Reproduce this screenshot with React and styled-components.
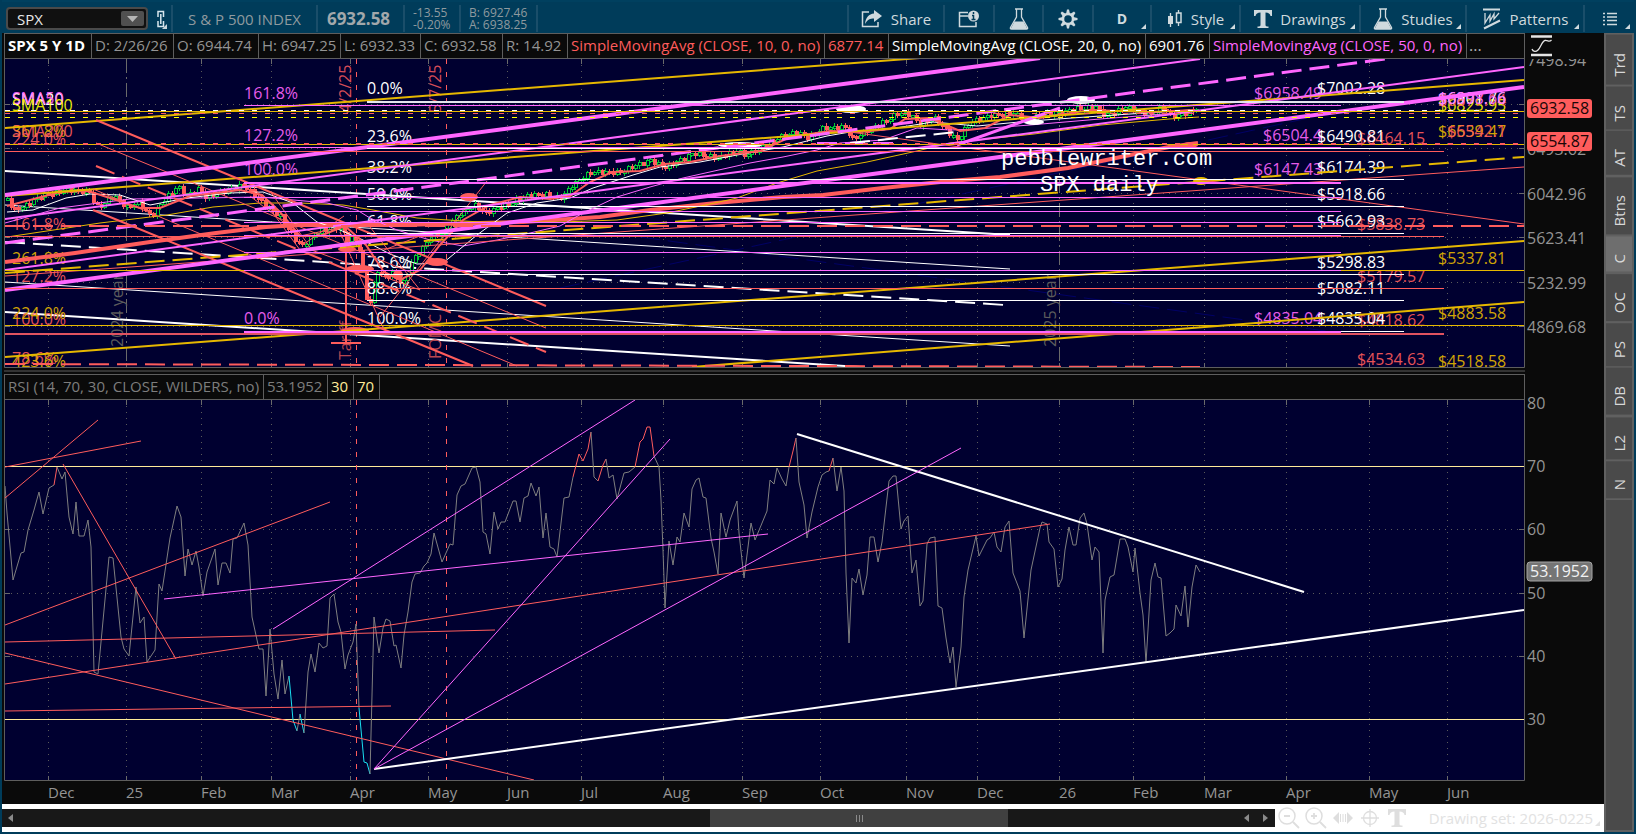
import styled, { createGlobalStyle } from "styled-components";

const PINK = "#ff66ff";
const RED = "#ff5c5c";
const GOLD = "#e6b800";
const WHITE = "#ffffff";
const GREEN = "#00cc33";
const LEFT = 5;
const RIGHT = 1524;

/* ---------- data ---------- */

const headerCells = [
  { text: "SPX 5 Y 1D", width: 87, color: WHITE, bold: true },
  { text: "D: 2/26/26", width: 82 },
  { text: "O: 6944.74", width: 85 },
  { text: "H: 6947.25", width: 82 },
  { text: "L: 6932.33", width: 80 },
  { text: "C: 6932.58", width: 82 },
  { text: "R: 14.92", width: 65 },
  { text: "SimpleMovingAvg (CLOSE, 10, 0, no)", width: 257, color: RED },
  { text: "6877.14", width: 64, color: RED },
  { text: "SimpleMovingAvg (CLOSE, 20, 0, no)", width: 257, color: WHITE },
  { text: "6901.76", width: 64, color: WHITE },
  { text: "SimpleMovingAvg (CLOSE, 50, 0, no)", width: 257, color: PINK },
];

const rsiCells = [
  { text: "RSI (14, 70, 30, CLOSE, WILDERS, no)", width: 259, color: "#7d7d7d" },
  { text: "53.1952", width: 64, color: "#7d7d7d" },
  { text: "30", width: 26, color: "#ffeb99" },
  { text: "70", width: 26, color: "#ffeb99" },
];

const railTabs = ["Trd", "TS", "AT", "Btns", "C", "OC", "PS", "DB", "L2", "N"];

const months = [
  [48, "Dec"], [126, "25"], [201, "Feb"], [271, "Mar"], [350, "Apr"],
  [428, "May"], [507, "Jun"], [581, "Jul"], [663, "Aug"], [742, "Sep"],
  [820, "Oct"], [906, "Nov"], [977, "Dec"], [1059, "26"], [1133, "Feb"],
  [1204, "Mar"], [1286, "Apr"], [1369, "May"], [1447, "Jun"],
];

const priceGrid = [
  [104, null], [148, "6493.62"], [193, "6042.96"], [237, "5623.41"],
  [282, "5232.99"], [326, "4869.68"],
];

const rsiGrid = [
  [403, "80"], [466, "70"], [529, "60"], [593, "50"], [656, "40"], [719, "30"],
];

// y, colour, start, end, width, dash
const levels = [
  [111, GOLD, LEFT, RIGHT, 1],
  [110, WHITE, LEFT, RIGHT, 1, "5 8"],
  [113, RED, LEFT, RIGHT, 1, "5 8"],
  [117, "#ffff00", LEFT, RIGHT, 1, "5 8"],
  [144, GOLD, LEFT, RIGHT, 1],
  [143, RED, LEFT, RIGHT, 2, "5 8"],
  [151, RED, LEFT, 1444, 1],
  [225, RED, LEFT, RIGHT, 2, "20 8"],
  [236, RED, LEFT, 1444, 1],
  [270, GOLD, LEFT, RIGHT, 1],
  [288, RED, LEFT, 1444, 1],
  [325, GOLD, LEFT, RIGHT, 1],
  [333, "#e05260", LEFT, 1444, 2],
  [101, "#e4e4ee", 367, 1404, 2],
  [148, WHITE, 367, 1404, 1],
  [179, WHITE, 367, 1404, 1],
  [206, WHITE, 367, 1404, 1],
  [233, WHITE, 367, 1404, 1],
  [274, WHITE, 367, 1404, 1],
  [300, WHITE, 367, 1404, 1],
  [331, WHITE, 367, 1404, 1],
  [105, PINK, 244, 1341, 1],
  [147, PINK, 244, 1341, 1],
  [182, PINK, 244, 1341, 2],
  [197, PINK, 244, 1341, 1],
  [211, PINK, 244, 1341, 1],
  [222, PINK, 244, 1341, 1],
  [235, PINK, 244, 1341, 1],
  [252, PINK, 244, 1341, 1],
  [270, PINK, 244, 1341, 1],
  [331, PINK, 244, 1341, 2],
];

// x1, y1, x2, y2, colour, width, dash
const backTrends = [
  [560, 288, 796, 237, "#000066", 1, "20 8"],
  [640, 237, 1340, 333, "#000066", 1, "20 8"],
  [880, 212, 1345, 110, "#000066", 1, "20 8"],
  [5, 171, 1010, 235, WHITE, 2],
  [5, 242, 1005, 305, WHITE, 2, "20 8"],
  [5, 205, 1010, 269, WHITE, 1],
  [5, 282, 1010, 346, WHITE, 1],
  [5, 312, 860, 367, WHITE, 2],
];

const frontTrends = [
  [5, 128, 920, 58, GOLD, 2],
  [5, 196, 1524, 80, GOLD, 2],
  [5, 273, 1524, 157, GOLD, 2, "20 8"],
  [5, 357, 1524, 241, GOLD, 2],
  [692, 367, 1524, 302, GOLD, 2],
  [5, 276, 1524, 167, RED, 1],
  [850, 132, 1524, 224, RED, 1],
  [96, 120, 546, 306, RED, 2],
  [96, 143, 546, 328, RED, 1],
  [96, 166, 546, 352, RED, 2, "20 8"],
  [93, 189, 517, 366, RED, 1],
  [93, 210, 473, 366, RED, 2],
  [5, 364, 1200, 367, RED, 2, "20 8"],
  [380, 317, 487, 181, RED, 1],
  [257, 191, 300, 250, RED, 1],
  [270, 191, 312, 250, RED, 1],
  [250, 196, 296, 232, RED, 1],
  [304, 244, 344, 216, RED, 1],
  [300, 236, 366, 222, RED, 1],
  [306, 248, 420, 290, RED, 1],
  [366, 222, 420, 290, RED, 1],
  [340, 232, 384, 330, RED, 1],
  [384, 250, 430, 232, RED, 1],
  [5, 195, 1040, 58, PINK, 4],
  [5, 219, 1200, 59, PINK, 2],
  [5, 243, 1385, 59, PINK, 3, "20 8"],
  [5, 270, 1524, 67, PINK, 2],
  [5, 290, 1524, 87, PINK, 4],
  [957, 145, 1060, 108, PINK, 3],
  [817, 143, 897, 143, PINK, 2, "20 8"],
  [850, 143, 957, 132, WHITE, 2, "20 8"],
];

const curves = [
  {
    color: RED,
    width: 4,
    points:
      "5,262 75,253 150,242 216,233 266,227 300,225 400,225 523,222 600,217 650,210 716,203 783,197 823,195 883,188 950,181 1000,177 1068,168 1135,154 1169,147 1198,143",
  },
  {
    color: GOLD,
    width: 1,
    points:
      "7,237 100,223 167,215 213,207 260,203 300,203 343,205 373,210 417,218 480,222 560,222 617,220 667,213 710,204 737,198 777,183 817,171 867,162 917,151 950,143 1034,134 1101,125 1169,119 1199,117",
  },
  {
    color: PINK,
    width: 1,
    points:
      "5,223 60,208 130,199 200,198 260,197 327,203 357,210 370,218 397,230 430,240 463,246 497,240 530,233 560,226 583,213 617,197 650,187 683,178 750,163 783,157 817,150 840,143 883,140 917,128 950,130 977,129 1030,125 1100,119 1190,112",
  },
  {
    color: WHITE,
    width: 1,
    points:
      "7,212 33,210 66,198 90,194 120,195 150,205 187,198 230,193 263,192 293,203 317,222 340,230 363,240 390,254 417,264 443,263 477,235 507,213 537,203 570,198 593,188 633,175 660,167 700,162 737,155 783,147 827,136 850,132 883,130 933,122 977,126 1030,121 1100,116 1190,110",
  },
  {
    color: RED,
    width: 2,
    points:
      "7,206 30,200 60,192 88,191 110,198 140,208 160,208 190,196 240,190 262,195 280,212 300,236 320,236 345,226 366,245 384,272 400,280 420,270 440,245 463,220 490,205 520,197 550,199 570,196 590,182 612,172 640,171 665,164 690,162 720,156 760,151 790,137 830,131 860,132 890,129 905,119 930,118 960,131 985,128 1010,115 1040,118 1090,110 1150,112 1195,110",
  },
];

const blobs = [
  [347, 249, 9, 3, RED], [360, 269, 14, 4, RED], [398, 275, 5, 5, RED],
  [355, 331, 14, 4, RED], [437, 262, 11, 4, RED], [469, 197, 9, 4, RED],
  [1190, 145, 8, 3, RED], [740, 145, 22, 3, WHITE], [851, 109, 15, 4, WHITE],
  [1081, 100, 14, 4, WHITE], [1034, 122, 10, 3, WHITE], [1201, 181, 8, 4, GOLD],
];

// swing points the daily bars run through
const swings = [
  [7, 198], [13, 210], [23, 207], [40, 196], [66, 190], [90, 192], [95, 207],
  [103, 205], [112, 195], [127, 208], [137, 202], [151, 217], [166, 197],
  [177, 187], [187, 195], [200, 188], [204, 198], [217, 193], [243, 185],
  [253, 195], [267, 207], [280, 217], [293, 237], [302, 246], [317, 232],
  [340, 227], [347, 240], [354, 238], [359, 250], [364, 282], [368, 312],
  [373, 286], [378, 268], [382, 278], [393, 273], [402, 286], [412, 260],
  [423, 247], [430, 237], [443, 233], [457, 215], [473, 205], [487, 213],
  [497, 208], [517, 200], [530, 195], [547, 195], [561, 198], [570, 187],
  [590, 172], [620, 172], [650, 160], [665, 168], [693, 153], [717, 158],
  [737, 150], [745, 156], [760, 148], [777, 138], [797, 132], [807, 138],
  [823, 128], [847, 127], [850, 140], [863, 133], [887, 120], [897, 113],
  [910, 115], [920, 125], [933, 117], [943, 127], [957, 140], [970, 122],
  [993, 115], [1013, 113], [1027, 121], [1040, 114], [1057, 114],
  [1074, 109], [1095, 107], [1105, 116], [1125, 107], [1149, 115],
  [1162, 107], [1172, 117], [1186, 113], [1198, 108],
];

const makeBars = () => {
  const bars = [];
  let seg = 0;
  let last = swings[0][1];
  for (let i = 0; i < 319; i++) {
    const x = 7 + i * 3.74;
    while (seg < swings.length - 2 && x > swings[seg + 1][0]) seg++;
    const [x1, y1] = swings[seg];
    const [x2, y2] = swings[seg + 1];
    const base = y1 + ((y2 - y1) * (x - x1)) / (x2 - x1);
    const close = base + Math.sin(i * 2.3) * 2.2;
    const body = Math.max(2, Math.abs(close - last));
    const tail = 1 + Math.abs(Math.sin(i * 1.7)) * 2;
    bars.push({ x: Math.round(x), top: Math.min(close, last), body, tail, down: close > last });
    last = close;
  }
  return bars;
};
const bars = makeBars();

// x, baseline, text, colour
const labels = [
  [12, 105, "SMA10", RED], [12, 105, "SMA20", WHITE], [12, 104, "SMA50", PINK],
  [12, 111, "SMA100", "#ffff00"], [12, 137, "361.8%", GOLD],
  [12, 137, "SMA200", RED], [12, 145, "224.0%", RED],
  [12, 230, "161.8%", RED], [12, 264, "261.8%", GOLD], [12, 282, "127.2%", RED],
  [12, 325, "100.0%", RED], [12, 319, "224.0%", GOLD],
  [12, 364, "78.6%", RED], [12, 367, "423.6%", GOLD],
  [244, 99, "161.8%", PINK], [244, 141, "127.2%", PINK],
  [244, 175, "100.0%", PINK], [244, 324, "0.0%", PINK],
  [1254, 99, "$6958.49", PINK], [1263, 141, "$6504.4", PINK],
  [1254, 175, "$6147.43", PINK], [1254, 324, "$4835.04", PINK],
  [1357, 144, "$6464.15", RED], [1357, 230, "$5838.73", RED],
  [1357, 282, "$5179.57", RED], [1357, 326, "$4818.62", RED],
  [1357, 365, "$4534.63", RED],
  [367, 94, "0.0%", WHITE], [367, 142, "23.6%", WHITE],
  [367, 173, "38.2%", WHITE], [367, 200, "50.0%", WHITE],
  [367, 227, "61.8%", WHITE], [367, 268, "78.6%", WHITE],
  [367, 294, "88.6%", WHITE], [367, 324, "100.0%", WHITE],
  [1317, 94, "$7002.28", WHITE], [1317, 142, "$6490.81", WHITE],
  [1317, 173, "$6174.39", WHITE], [1317, 200, "$5918.66", WHITE],
  [1317, 227, "$5662.93", WHITE], [1317, 268, "$5298.83", WHITE],
  [1317, 294, "$5082.11", WHITE], [1317, 324, "$4835.04", WHITE],
  [1438, 111, "$6825.95", "#ffff00"], [1438, 106, "$6877.14", RED],
  [1438, 104, "$6901.76", WHITE], [1438, 104, "$6898.66", PINK],
  [1438, 137, "$6539.47", GOLD], [1447, 137, "$6542.1", RED],
  [1438, 264, "$5337.81", GOLD], [1438, 319, "$4883.58", GOLD],
  [1438, 367, "$4518.58", GOLD],
];

const sideLabels = [
  [351, 113, "4/2/25", "#d64e58"], [351, 360, "Tariff", "#b84650"],
  [441, 113, "5/7/25", "#d64e58"], [441, 359, "FOMC", "#b84650"],
  [123, 347, "2024 year", "#5c5c5c"], [1056, 347, "2025 year", "#5c5c5c"],
];

const rsiRuns = [
  ["#7f7f7f", "5,486 7,513 13,580 21,553 24,552 28,530 34,510 39,492 43,514 49,488 54,485"],
  [RED, "54,485 57,467"],
  ["#7f7f7f", "57,467 62,479 65,472 69,517 73,534 76,502 79,536 84,536 88,520 91,547 94,672 98,674 109,557 113,558 121,637 124,649 129,656 136,587 140,623 144,617 147,662 155,650 159,584 162,591 170,538 177,506 181,517 185,576 188,549 192,565 196,551 199,567 203,596 207,572 215,549 218,585 222,563 226,563 230,573 233,539 237,538 244,523 248,545 252,617 259,649 263,649 266,696 270,629 274,674 278,699 282,660 285,694 289,676"],
  ["#19e0f0", "289,676 293,720 297,731"],
  ["#7f7f7f", "297,731 300,714"],
  ["#19e0f0", "300,714 304,733"],
  ["#7f7f7f", "304,733 308,672 311,654 315,672 319,643 323,648 327,646 330,598 334,594 338,622 341,632 345,669 348,655 353,642 356,624 359,708"],
  ["#19e0f0", "359,708 364,762 367,763 370,774"],
  ["#7f7f7f", "370,774 374,617 379,653 383,628 386,619 390,621 394,646 396,645 401,668 404,635 408,612 412,582 415,574 420,573 424,566 427,563 431,554 434,533 442,562 450,544 453,545 457,495 461,486 465,484 472,468 476,467 480,482 483,532 486,534 490,554 494,512 498,529 501,522 505,522 513,501 516,501 520,522 524,498 528,496 531,483 536,496 539,487 543,538 546,513 550,547 554,549 557,557 564,498 569,497 573,477"],
  [RED, "573,477 579,454 583,461 588,449 591,432"],
  ["#7f7f7f", "591,432 594,477 598,481"],
  [RED, "598,481 603,465 606,459"],
  ["#7f7f7f", "606,459 609,478 613,475 617,499 624,473 629,472 635,467"],
  [RED, "635,467 640,442 643,439 647,427 650,427 654,456"],
  ["#7f7f7f", "654,456 659,467 661,500 663,550 665,608 669,541 673,565 677,537 680,542 684,513 689,527 692,489 696,480 699,478 703,497 706,498 711,538 714,552 718,574 721,513 726,537 730,520 737,501 739,533 744,578 747,555 751,523 755,540 767,511 770,480 774,484 777,468 782,479 786,486 789,467"],
  [RED, "789,467 793,451 796,438"],
  ["#7f7f7f", "796,438 799,482 804,505 807,538 812,512 818,487 822,475 826,472 829,471"],
  [RED, "829,471 833,458"],
  ["#7f7f7f", "833,458 837,491 841,467 844,491 846,573 849,643 852,578 856,583 859,569 863,595 867,575 870,537 874,537 878,562 882,542 889,481 893,476 896,476 901,529 904,521 908,516 912,573 916,560 920,606 923,601 927,544 930,538 935,537 938,606 942,608 946,638 950,663 953,647 956,687 961,647 964,597 968,570 976,536 979,556 987,540 990,538 994,532 997,547 1001,552 1005,527 1009,521 1013,573 1020,591 1024,638 1031,570 1040,528 1042,522 1047,524 1049,542 1054,549 1058,587 1062,579 1065,550 1069,527 1073,545 1076,545 1080,518 1084,513 1087,524 1092,560 1095,547 1099,552 1103,653 1105,600 1110,577 1114,575 1120,539 1125,539 1128,547 1133,572 1135,548 1140,593 1143,615 1146,663 1151,580 1155,563 1158,577 1161,578 1166,636 1170,633 1174,629 1176,605 1181,616 1185,586 1188,627 1192,587 1196,565 1200,572"],
];

const rsiTrends = [
  [5, 498, 98, 420, RED, 1],
  [5, 467, 141, 441, RED, 1],
  [63, 464, 176, 659, RED, 1],
  [5, 625, 330, 502, RED, 1],
  [5, 642, 495, 630, RED, 1],
  [5, 684, 1050, 524, RED, 1],
  [5, 653, 534, 780, RED, 1],
  [5, 711, 391, 706, RED, 1],
  [374, 769, 1524, 610, WHITE, 2],
  [797, 434, 1304, 592, WHITE, 2],
  [164, 599, 768, 534, PINK, 1],
  [273, 629, 635, 400, PINK, 1],
  [374, 769, 670, 439, PINK, 1],
  [374, 769, 961, 448, PINK, 1],
];

/* ---------- chart parts ---------- */

const HLine = ({ y, x1 = LEFT, x2 = RIGHT, color, width = 1, dash }) => (
  <line
    x1={x1}
    x2={x2}
    y1={y + width / 2}
    y2={y + width / 2}
    stroke={color}
    strokeWidth={width}
    strokeDasharray={dash}
    shapeRendering="crispEdges"
  />
);

const VLine = ({ x, y1, y2, color, dash }) => (
  <line
    x1={x + 0.5}
    x2={x + 0.5}
    y1={y1}
    y2={y2}
    stroke={color}
    strokeDasharray={dash}
    shapeRendering="crispEdges"
  />
);

const Trends = ({ items }) =>
  items.map(([x1, y1, x2, y2, color, width, dash], i) => (
    <line
      key={i}
      x1={x1}
      y1={y1}
      x2={x2}
      y2={y2}
      stroke={color}
      strokeWidth={width}
      strokeDasharray={dash}
    />
  ));

const Grid = ({ top, bottom, rows }) => (
  <>
    {rows.map(([y]) => (
      <g key={y}>
        <HLine y={y} color="#5a5a5a" dash="1 5" />
        <HLine y={y} x1={LEFT} x2={10} color="#6a6a6a" />
        <HLine y={y} x1={1519} color="#6a6a6a" />
      </g>
    ))}
    {months.map(([x]) => (
      <g key={x}>
        <VLine x={x} y1={top} y2={bottom} color="#5a5a5a" dash="1 5" />
        <VLine x={x} y1={top} y2={top + 5} color="#6a6a6a" />
        <VLine x={x} y1={bottom - 4} y2={bottom} color="#6a6a6a" />
      </g>
    ))}
  </>
);

const Tag = ({ y, text, fill, stroke, color }) => (
  <g>
    <rect x="1527" y={y} width="65" height="19" rx="3" fill={fill} stroke={stroke} />
    <text x="1530" y={y + 15} fill={color}>
      {text}
    </text>
  </g>
);

const PriceChart = () => (
  <Chart viewBox="4 59 1600 309" role="img" aria-label="SPX daily price">
    <clipPath id="pricePlot">
      <rect x="5" y="59" width="1519" height="308" />
    </clipPath>
    <rect x="4" y="58" width="1520" height="309" fill="#000030" />
    <g clipPath="url(#pricePlot)">
      <Grid top={59} bottom={367} rows={priceGrid} />
      <VLine x={126} y1={59} y2={367} color="#6a6a6a" dash="14 4 2 4" />
      <VLine x={1059} y1={59} y2={367} color="#6a6a6a" dash="14 4 2 4" />
      <VLine x={356} y1={59} y2={367} color={RED} dash="5 8" />
      <VLine x={446} y1={59} y2={367} color={RED} dash="5 8" />
      <Trends items={backTrends} />
      {bars.map(({ x, top, body, tail, down }) => (
        <g key={x} shapeRendering="crispEdges">
          <line
            x1={x + 0.5}
            x2={x + 0.5}
            y1={top - tail}
            y2={top + body + tail}
            stroke={down ? RED : GREEN}
          />
          <rect
            x={x - 1}
            y={top}
            width="3"
            height={body}
            fill={down ? RED : "#000030"}
            stroke={down ? RED : GREEN}
          />
        </g>
      ))}
      {sideLabels.map(([x, y, text, color]) => (
        <text key={text} transform={`translate(${x} ${y}) rotate(-90)`} fill={color}>
          {text}
        </text>
      ))}
      {labels.map(([x, y, text, color], i) => (
        <text key={i} x={x} y={y} fill={color} opacity={color === WHITE ? 1 : 0.9}>
          {text}
        </text>
      ))}
      {curves.map(({ color, width, points }) => (
        <polyline key={points} points={points} fill="none" stroke={color} strokeWidth={width} />
      ))}
      {blobs.map(([cx, cy, rx, ry, fill]) => (
        <ellipse key={cx} cx={cx} cy={cy} rx={rx} ry={ry} fill={fill} />
      ))}
      <path d="M348 234V343M333 343h30" transform="translate(-2 0)" stroke={RED} strokeWidth="2" fill="none" />
      <Trends items={frontTrends} />
      {levels.map(([y, color, x1, x2, width, dash], i) => (
        <HLine key={i} y={y} color={color} x1={x1} x2={x2} width={width} dash={dash} />
      ))}
      <Note x="1001" y="165">pebblewriter.com</Note>
      <Note x="1040" y="191">SPX daily</Note>
    </g>
    <path d="M4.500 58V367.500H1524.500V58" fill="none" stroke="#5e5e5e" />
    <text x="1527" y="66" fill="#949494">7498.94</text>
    {priceGrid.map(
      ([y, text]) =>
        text && (
          <text key={y} x="1527" y={y + 7} fill="#949494">
            {text}
          </text>
        )
    )}
    <Tag y={99} text="6932.58" fill={RED} color="#1a0606" />
    <Tag y={132} text="6554.87" fill={RED} color="#1a0606" />
  </Chart>
);

const RsiChart = () => (
  <Chart viewBox="4 400 1600 404" role="img" aria-label="RSI" $spill>
    <clipPath id="rsiPlot">
      <rect x="5" y="400" width="1519" height="380" />
    </clipPath>
    <rect x="4" y="400" width="1520" height="380" fill="#000030" />
    <g clipPath="url(#rsiPlot)">
      <Grid top={400} bottom={780} rows={rsiGrid.slice(1)} />
      <HLine y={466} color="#ffeb99" />
      <HLine y={719} color="#ffeb99" />
      <VLine x={356} y1={400} y2={780} color={RED} dash="5 8" />
      <VLine x={446} y1={400} y2={780} color={RED} dash="5 8" />
      {rsiRuns.map(([color, points]) => (
        <polyline key={points} points={points} fill="none" stroke={color} />
      ))}
      <Trends items={rsiTrends} />
    </g>
    <path d="M4.500 400V780.500H1524.500V400" fill="none" stroke="#5e5e5e" />
    {rsiGrid.map(([y, text]) => (
      <text key={y} x="1527" y={y + 6} fill="#949494">
        {text}
      </text>
    ))}
    <Tag y={562} text="53.1952" fill="#757575" stroke="#a5a5a5" color="#f2f2f2" />
    {months.map(([x, text]) => (
      <Month key={x} x={x} y="798">
        {text}
      </Month>
    ))}
  </Chart>
);

/* ---------- icons ---------- */

const ShareIcon = () => (
  <svg width="22" height="18" viewBox="0 0 22 18">
    <path d="M8 2H1.500V16.500H17V12" fill="none" stroke="currentColor" strokeWidth="1.500" />
    <path d="M13 0l8 6-8 6V8.500C9 8.500 6.500 9.500 4 14 4.500 7.500 8 4 13 3.500z" fill="currentColor" />
  </svg>
);

const InfoIcon = () => (
  <svg width="22" height="18" viewBox="0 0 22 18">
    <path d="M10 2.500H1.500V16.500H18V12M2 6h8" fill="none" stroke="currentColor" strokeWidth="1.500" />
    <circle cx="15.500" cy="6" r="5.500" fill="currentColor" />
    <path d="M15.500 2v2M14 5.500h1.500V9M13.500 9.500h4" stroke="#003c5a" strokeWidth="1.500" fill="none" />
  </svg>
);

const FlaskIcon = () => (
  <svg width="20" height="22" viewBox="0 0 20 22">
    <path d="M6 1h8M7.500 1v8L1.500 19.500q-.5 1.500 1 1.500h15q1.500 0 1-1.500L12.500 9V1" fill="none" stroke="currentColor" strokeWidth="1.300" />
    <path d="M5.500 13.500h9l4 7.500h-17z" fill="currentColor" />
  </svg>
);

const GearIcon = () => (
  <svg width="20" height="20" viewBox="0 0 20 20">
    <circle cx="10" cy="10" r="5" fill="none" stroke="currentColor" strokeWidth="2.500" />
    {[0, 45, 90, 135, 180, 225, 270, 315].map((a) => (
      <path key={a} d="M8 5L9 .5h2L12 5z" fill="currentColor" transform={`rotate(${a} 10 10)`} />
    ))}
  </svg>
);

const CandleIcon = () => (
  <svg width="16" height="18" viewBox="0 0 16 18">
    <path d="M3.500 3v14M11.500 0v3M11.500 13v3" stroke="currentColor" strokeWidth="1.300" />
    <path d="M1 6h5v8H1z" fill="currentColor" />
    <path d="M9.500 3h4.500v9.500H9.500z" fill="none" stroke="currentColor" strokeWidth="1.500" />
  </svg>
);

const TextIcon = () => (
  <svg width="18" height="18" viewBox="0 0 18 18">
    <path d="M0 0h18v6h-1.500Q16 2.500 11.500 2.500V15q0 1.500 3 1.500V18h-11v-1.500q3 0 3-1.500V2.500Q2 2.500 1.500 6H0z" fill="currentColor" />
  </svg>
);

const PatternIcon = () => (
  <svg width="20" height="22" viewBox="0 0 20 22">
    <path d="M1 1.500h17M2 20.500L18 12.500" stroke="currentColor" strokeWidth="2" />
    <path d="M3 5v10l5-8v6l4-7v5l5-6" fill="none" stroke="currentColor" strokeWidth="1.300" />
  </svg>
);

const ListIcon = () => (
  <svg width="14" height="14" viewBox="0 0 14 14">
    <path d="M0 1.500h2M4 1.500h10M0 5h2M4 5h10M0 8.500h2M4 8.500h10M0 12.500h2M4 12.500h10" stroke="currentColor" strokeWidth="1.600" />
  </svg>
);

const LinkIcon = () => (
  <svg width="8" height="18" viewBox="0 0 8 18">
    <path d="M1 7V1.500h5.500V7M1 11v5.500h5.500V11M3.800 4v10" fill="none" stroke="#d6e6ee" strokeWidth="1.500" />
  </svg>
);

const CurveIcon = () => (
  <svg width="22" height="22" viewBox="0 0 22 22">
    <path d="M0 1.500h21M0 20h21" stroke="#e4e4e4" strokeWidth="2.500" />
    <path d="M1 14c1 3 4 3 6 1 3-3 4-9 7-9.500 3-.5 4 2 6.500-.5" fill="none" stroke="#e4e4e4" strokeWidth="1.300" />
  </svg>
);

const ZoomIcon = ({ plus }) => (
  <svg width="22" height="22" viewBox="0 0 22 22">
    <circle cx="9" cy="9" r="8" fill="none" stroke="currentColor" strokeWidth="1.500" />
    <path d={plus ? "M6 9h6M9 6v6M15 15l6 6" : "M6 9h6M15 15l6 6"} fill="none" stroke="currentColor" strokeWidth="1.800" />
  </svg>
);

const WidthIcon = () => (
  <svg width="20" height="14" viewBox="0 0 20 14">
    <path d="M0 7l6-6v12zM20 7l-6-6v12z" fill="currentColor" />
    <path d="M7.500 3v8M10 3v8M12.500 3v8" stroke="currentColor" />
  </svg>
);

const CrossIcon = () => (
  <svg width="18" height="18" viewBox="0 0 18 18">
    <circle cx="9" cy="9" r="6.500" fill="none" stroke="currentColor" strokeWidth="1.300" />
    <path d="M9 0v18M0 9h18" stroke="currentColor" strokeWidth="1.300" />
  </svg>
);

const Arrow = ({ right }) => (
  <svg width="5" height="8" viewBox="0 0 5 8">
    <path d={right ? "M0 0l5 4-5 4z" : "M5 0L0 4l5 4z"} fill="#8a8a8a" />
  </svg>
);

/* ---------- page ---------- */

const StudyHeader = ({ cells, more }) => (
  <HeaderRow>
    {cells.map(({ text, width, color, bold }) => (
      <HeaderCell key={text} $width={width} $color={color} $bold={bold}>
        {text}
      </HeaderCell>
    ))}
    {more && <More>...</More>}
  </HeaderRow>
);

const App = () => {
  return (
    <Page>
      <GlobalStyle />
      <Toolbar>
        <SymbolBox>
          <SymbolInput aria-label="Symbol" defaultValue="SPX" />
          <DropButton aria-label="Choose symbol">
            <svg width="11" height="6" viewBox="0 0 11 6">
              <path d="M0 0h11L5.500 6z" fill="#b5b5b5" />
            </svg>
          </DropButton>
        </SymbolBox>
        <LinkButton aria-label="Link" $menu>
          <LinkIcon />
        </LinkButton>
        <Quote $width={145}>S &amp; P 500 INDEX</Quote>
        <Quote $width={87}>
          <LastPrice>6932.58</LastPrice>
        </Quote>
        <Quote $width={56} $small>
          <span>-13.55</span>
          <span>-0.20%</span>
        </Quote>
        <Quote $width={77} $small>
          <span>B: 6927.46</span>
          <span>A: 6938.25</span>
        </Quote>
        <Spacer />
        <ToolButton $width={96}><ShareIcon />Share</ToolButton>
        <ToolButton $width={50} aria-label="Company info"><InfoIcon /></ToolButton>
        <ToolButton $width={49} aria-label="Edit studies"><FlaskIcon /></ToolButton>
        <ToolButton $width={50} aria-label="Settings"><GearIcon /></ToolButton>
        <ToolButton $width={58} $menu><Period>D</Period></ToolButton>
        <ToolButton $width={89} $menu><CandleIcon />Style</ToolButton>
        <ToolButton $width={120} $menu><TextIcon />Drawings</ToolButton>
        <ToolButton $width={106} $menu><FlaskIcon />Studies</ToolButton>
        <ToolButton $width={118} $menu><PatternIcon />Patterns</ToolButton>
        <ToolButton $width={51} $menu aria-label="Menu"><ListIcon /></ToolButton>
      </Toolbar>
      <Body>
        <Main>
          <Panels>
            <HeaderLine>
              <StudyHeader cells={headerCells} more />
              <ScaleButton aria-label="Scale"><CurveIcon /></ScaleButton>
            </HeaderLine>
            <PriceChart />
            <Splitter />
            <HeaderLine>
              <StudyHeader cells={rsiCells} />
              <AxisGap />
            </HeaderLine>
            <RsiChart />
          </Panels>
          <Footer>
            <ScrollTrack>
              <Arrow />
              <Thumb>
                <Grip />
                <Grip />
                <Grip />
              </Thumb>
              <ScrollEnd>
                <Arrow />
                <Arrow right />
              </ScrollEnd>
            </ScrollTrack>
            <FootTools>
              <FootButton aria-label="Zoom out"><ZoomIcon /></FootButton>
              <FootButton aria-label="Zoom in"><ZoomIcon plus /></FootButton>
              <FootButton aria-label="Fit width"><WidthIcon /></FootButton>
              <FootButton aria-label="Crosshair"><CrossIcon /></FootButton>
              <FootButton aria-label="Text"><TextIcon /></FootButton>
              <DrawingSet $menu>Drawing set: 2026-0225</DrawingSet>
            </FootTools>
          </Footer>
        </Main>
        <Rail>
          {railTabs.map((tab) => (
            <RailTab key={tab} $active={tab === "C"}>
              {tab}
            </RailTab>
          ))}
          <RailFill />
        </Rail>
      </Body>
    </Page>
  );
};

export default App;

const GlobalStyle = createGlobalStyle`
  * {
    box-sizing: border-box;
  }
  body {
    margin: 0;
    background: #003c5a;
    font-family: "Open Sans", sans-serif;
    font-size: 16px;
  }
  button, input {
    font: inherit;
    color: inherit;
    border: 0;
    padding: 0;
    background: none;
  }
  svg {
    display: block;
    flex: none;
  }
`;

const Page = styled.div`
  display: flex;
  flex-direction: column;
  min-height: 100vh;
  padding: 0 2px 2px;
  background: #003c5a;
`;

const Toolbar = styled.header`
  display: flex;
  align-items: center;
  height: 33px;
  padding: 4px 0 2px 4px;
  border-top: 2px solid #00405f;
  color: #c9d5dc;
`;

const menuCorner = `
  &::after {
    content: "";
    position: absolute;
    right: 4px;
    bottom: 3px;
    border-left: 5px solid transparent;
    border-bottom: 5px solid currentColor;
  }
`;

const SymbolBox = styled.div`
  display: flex;
  align-items: center;
  width: 142px;
  height: 23px;
  padding-right: 2px;
  border: 2px solid #4a4a4a;
  border-radius: 4px;
  background: #101010;
`;

const SymbolInput = styled.input`
  flex: 1;
  min-width: 0;
  padding-left: 9px;
  font-size: 15px;
  line-height: 18px;
  color: #e8e8e8;
`;

const DropButton = styled.button`
  display: flex;
  align-items: center;
  justify-content: center;
  width: 23px;
  height: 15px;
  border-radius: 2px;
  background: #505050;
`;

const LinkButton = styled.button`
  position: relative;
  display: flex;
  align-items: center;
  width: 23px;
  height: 27px;
  padding-left: 9px;
  ${(props) => props.$menu && menuCorner}
`;

const Quote = styled.div`
  display: flex;
  flex-direction: column;
  align-items: ${(props) => (props.$small ? "flex-start" : "center")};
  justify-content: center;
  flex: none;
  width: ${(props) => props.$width}px;
  height: 27px;
  padding-left: ${(props) => (props.$small ? 8 : 0)}px;
  border-left: 2px solid #1a4e6a;
  font-size: ${(props) => (props.$small ? 12 : 15)}px;
  line-height: ${(props) => (props.$small ? 12 : 20)}px;
  white-space: nowrap;
  color: #8f9a9f;
`;

const LastPrice = styled.strong`
  padding-right: 4px;
  font-size: 17px;
  color: #a2a8ab;
`;

const Spacer = styled.div`
  flex: 1;
  height: 27px;
  border-left: 2px solid #1a4e6a;
`;

const ToolButton = styled.button`
  position: relative;
  display: flex;
  align-items: center;
  justify-content: center;
  gap: 8px;
  flex: none;
  width: ${(props) => props.$width}px;
  height: 27px;
  border-left: 2px solid #1a4e6a;
  font-size: 15px;
  color: #d0dade;
  ${(props) => props.$menu && menuCorner}
`;

const Period = styled.b`
  font-size: 14px;
`;

const Body = styled.div`
  display: flex;
  flex: 1;
`;

const Main = styled.main`
  display: flex;
  flex-direction: column;
  flex: 1;
  min-width: 0;
  background: #0a0a0a;
`;

const Panels = styled.div`
  padding-left: 2px;
`;

const HeaderLine = styled.div`
  display: flex;
`;

const HeaderRow = styled.div`
  display: flex;
  flex: 1;
  min-width: 0;
  height: 26px;
  border: 1px solid #5e5e5e;
  overflow: hidden;
`;

const HeaderCell = styled.div`
  flex: none;
  width: ${(props) => props.$width}px;
  padding-left: 3px;
  border-right: 1px solid #5e5e5e;
  line-height: 23px;
  white-space: nowrap;
  font-weight: ${(props) => (props.$bold ? 700 : 400)};
  font-size: 15px;
  color: ${(props) => props.$color || "#949494"};
`;

const More = styled.div`
  padding-left: 2px;
  line-height: 23px;
  color: #b0b0b0;
`;

const ScaleButton = styled.button`
  display: flex;
  align-items: center;
  width: 79px;
  padding-left: 6px;
`;

const AxisGap = styled.div`
  width: 79px;
`;

const Chart = styled.svg`
  width: 100%;
  height: auto;
  overflow: ${(props) => (props.$spill ? "visible" : "hidden")};
  font-size: 16px;
`;

const Month = styled.text`
  font-size: 15px;
  fill: #949494;
`;

const Note = styled.text`
  font-family: "Liberation Mono", monospace;
  font-size: 22px;
  fill: #ffffff;
`;

const Splitter = styled.div`
  height: 6px;
  margin-right: 79px;
  border: solid #0a0a0a;
  border-width: 2px 0;
  background: #333333;
`;

const Footer = styled.footer`
  display: flex;
  align-items: center;
  flex: 1;
  min-height: 28px;
  background: #ffffff;
`;

const ScrollTrack = styled.div`
  display: grid;
  grid-template-columns: 702px 298px 1fr;
  align-items: center;
  flex: 1;
  height: 18px;
  padding-left: 6px;
  background: #181818;
`;

const Thumb = styled.div`
  display: flex;
  align-items: center;
  justify-content: center;
  gap: 2px;
  height: 18px;
  background: #404040;
`;

const Grip = styled.span`
  width: 1px;
  height: 7px;
  background: #8a8a8a;
`;

const ScrollEnd = styled.div`
  display: flex;
  justify-content: flex-end;
  gap: 14px;
  padding-right: 7px;
`;

const FootTools = styled.div`
  display: flex;
  align-items: center;
  width: 329px;
  color: #dedede;
`;

const FootButton = styled.button`
  display: flex;
  align-items: center;
  justify-content: center;
  width: 27px;
  height: 22px;
`;

const DrawingSet = styled.button`
  position: relative;
  flex: 1;
  padding-right: 11px;
  font-size: 15px;
  line-height: 22px;
  text-align: right;
  white-space: nowrap;
  color: #e2e2e2;
  ${(props) => props.$menu && menuCorner}
`;

const Rail = styled.nav`
  display: flex;
  flex-direction: column;
  gap: 2px;
  width: 30px;
  padding: 2px 2px 2px;
  background: #606060;
`;

const RailTab = styled.button`
  display: flex;
  align-items: center;
  width: 26px;
  padding: 8px 0 18px;
  writing-mode: vertical-rl;
  transform: rotate(180deg);
  font-size: 15px;
  line-height: 26px;
  color: #d8d8d8;
  background: ${(props) => (props.$active ? "#6e6e6e" : "#4a4a4a")};
`;

const RailFill = styled.div`
  flex: 1;
  background: #4a4a4a;
`;
